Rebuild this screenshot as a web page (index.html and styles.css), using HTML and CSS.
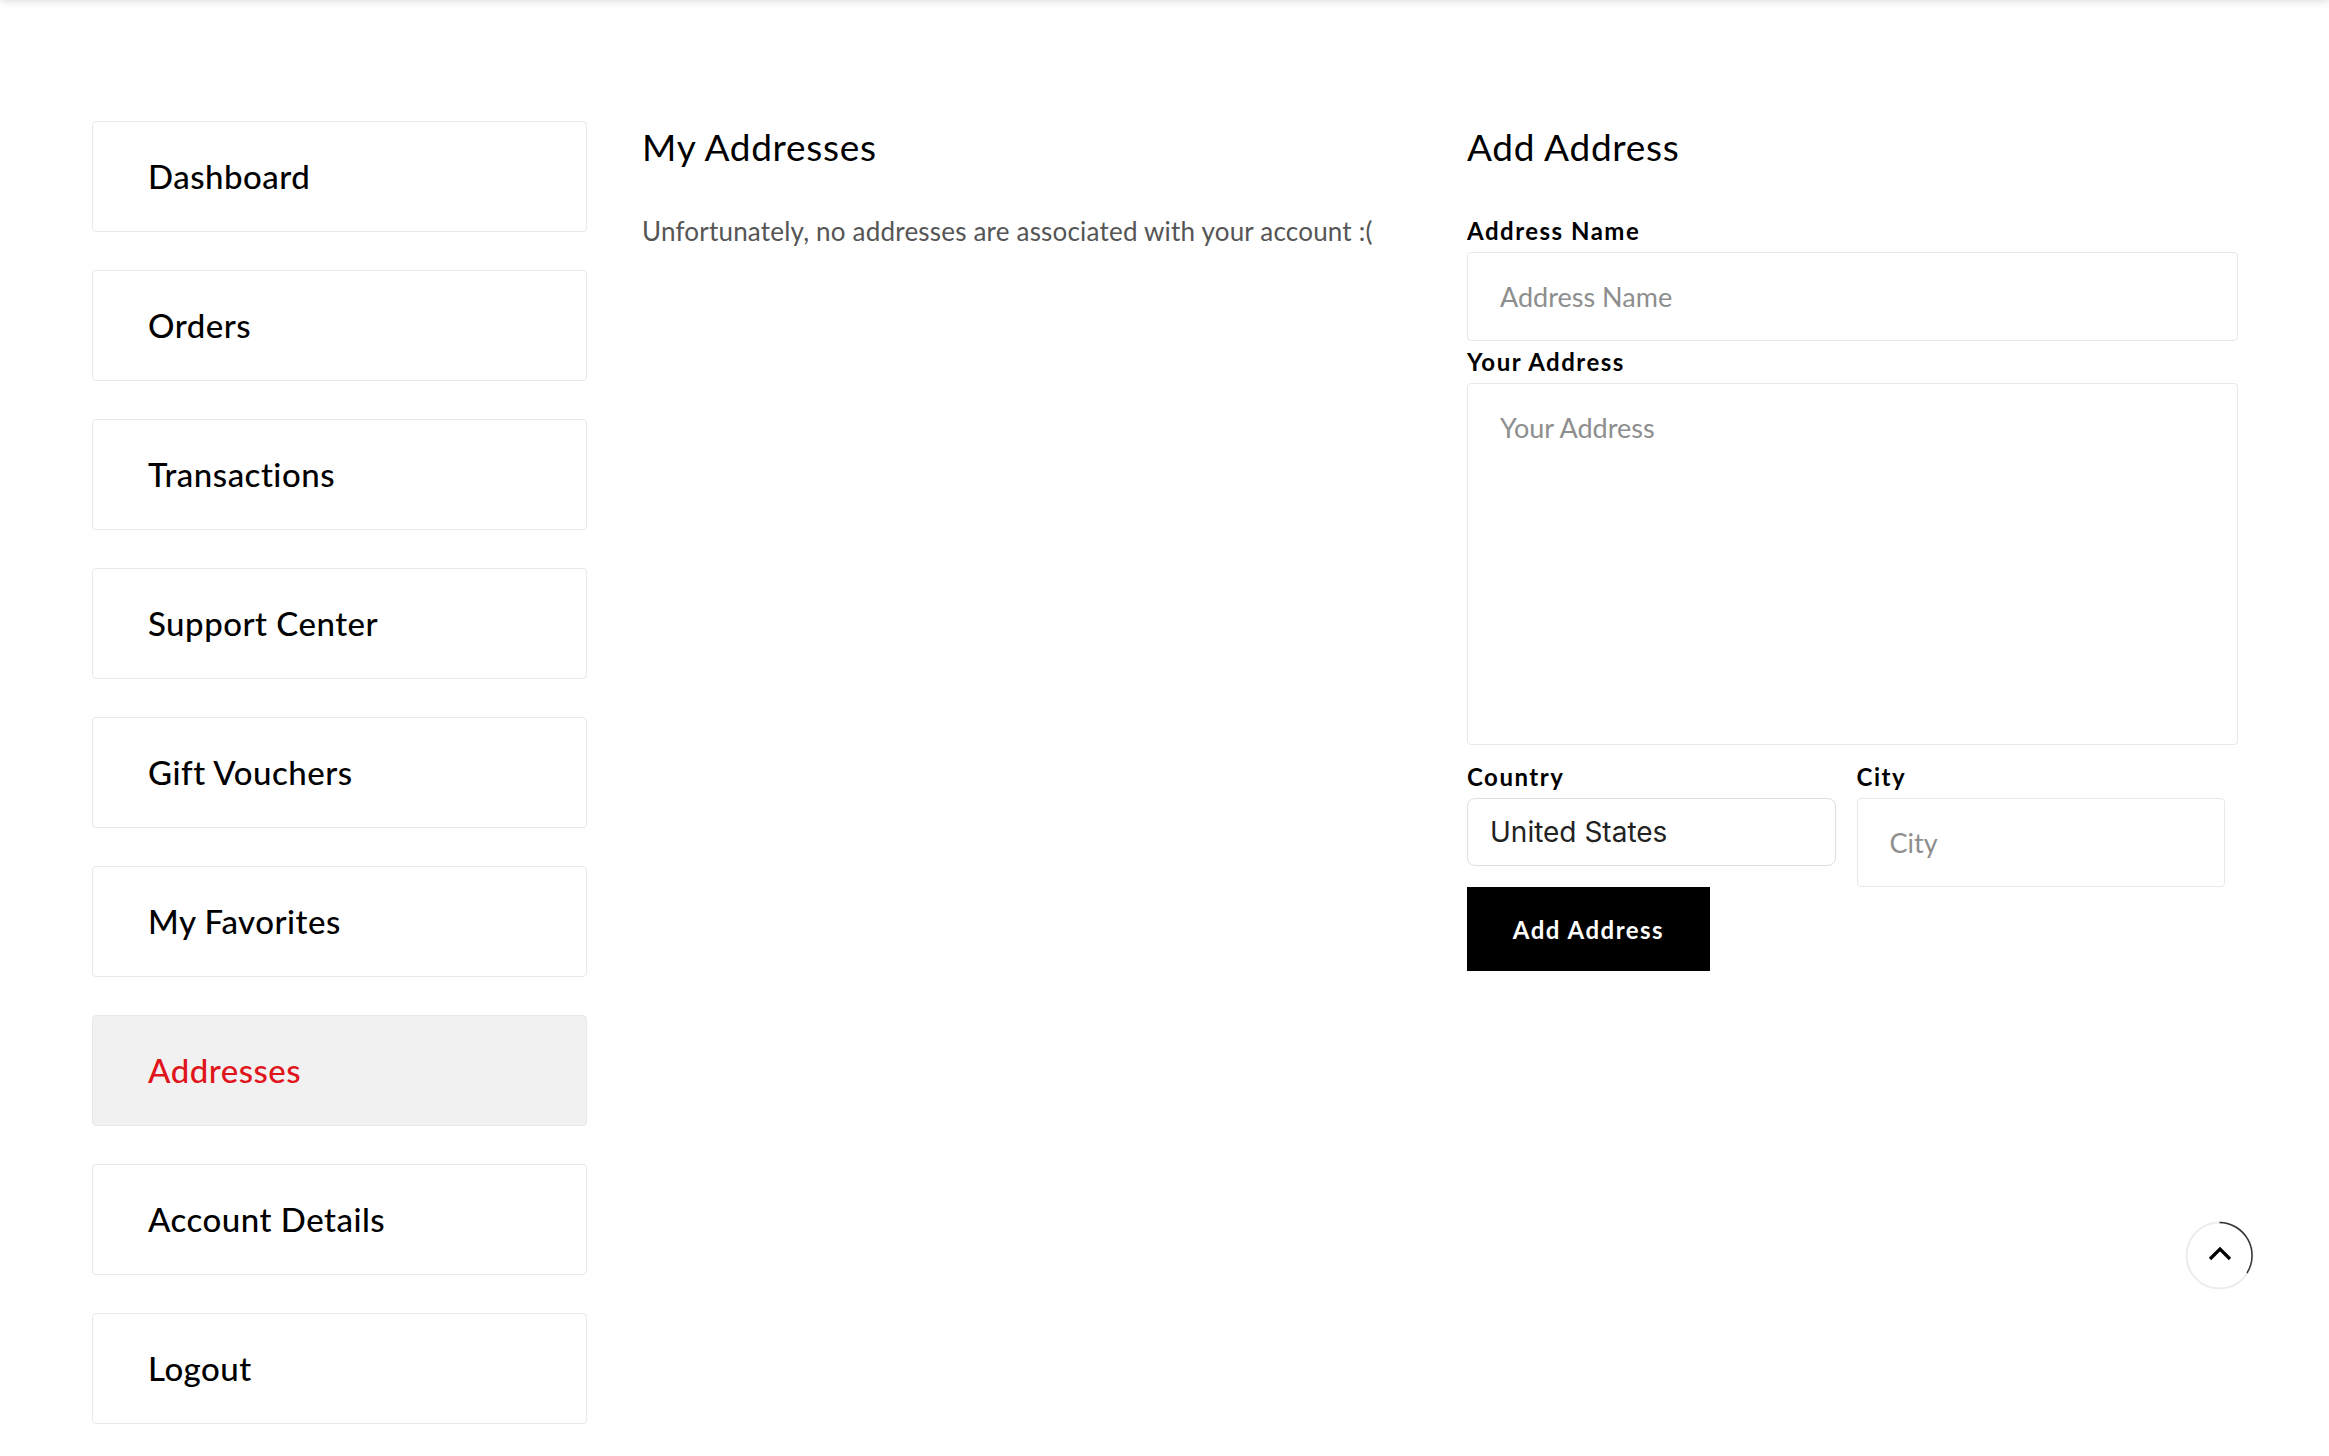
FILE: index.html
```html
<!DOCTYPE html>
<html lang="en">

<head>
    <meta charset="UTF-8">
    <meta name="viewport" content="width=device-width, initial-scale=1.0">
    <title>My Account - Addresses</title>

    <link rel="stylesheet" href="styles.css">
</head>

<body>
    <div class="header-shadow"></div>

    <div class="account">
        <nav class="account-nav">
            <a class="nav-item" href="#">Dashboard</a>
            <a class="nav-item" href="#">Orders</a>
            <a class="nav-item" href="#">Transactions</a>
            <a class="nav-item" href="#">Support Center</a>
            <a class="nav-item" href="#">Gift Vouchers</a>
            <a class="nav-item" href="#">My Favorites</a>
            <a class="nav-item active" href="#">Addresses</a>
            <a class="nav-item" href="#">Account Details</a>
            <a class="nav-item" href="#">Logout</a>
        </nav>

        <section class="address-list">
            <h2 class="section-title">My Addresses</h2>
            <p class="empty-text">Unfortunately, no addresses are associated with your account :(</p>
        </section>

        <section class="address-form">
            <h2 class="section-title">Add Address</h2>
            <form>
                <label class="field-label" for="address_name">Address Name</label>
                <input class="field-input" type="text" id="address_name" placeholder="Address Name">

                <label class="field-label" for="address_text">Your Address</label>
                <textarea class="field-input field-textarea" id="address_text" placeholder="Your Address"></textarea>

                <div class="field-row">
                    <div class="field-col">
                        <label class="field-label" for="country">Country</label>
                        <select class="field-select" id="country">
                            <option>United States</option>
                        </select>
                        <button class="submit-btn" type="button">Add Address</button>
                    </div>
                    <div class="field-col">
                        <label class="field-label" for="city">City</label>
                        <input class="field-input" type="text" id="city" placeholder="City">
                    </div>
                </div>
            </form>
        </section>
    </div>

    <button class="scroll-top" type="button" aria-label="Scroll to top">
        <svg class="scroll-ring" width="69" height="69" viewBox="0 0 69 69">
            <circle cx="34.5" cy="34.5" r="33" fill="none" stroke="#ececec" stroke-width="2" />
            <path d="M34.5 1.5 A33 33 0 0 1 62 52" fill="none" stroke="#333" stroke-width="1.5" />
        </svg>
        <svg class="scroll-arrow" width="24" height="16" viewBox="0 0 24 16">
            <path d="M2 13 L12 3 L22 13" fill="none" stroke="#000" stroke-width="3.2" />
        </svg>
    </button>
</body>

</html>
```

FILE: styles.css
```css
* {
    box-sizing: border-box;
    margin: 0;
    padding: 0;
}

body {
    background: #fff;
    color: #000;
    font-family: Lato, "Noto Sans", sans-serif;
    height: 100vh;
    overflow: hidden;
}

.header-shadow {
    position: fixed;
    top: -20px;
    left: 0;
    right: 0;
    height: 20px;
    box-shadow: 0 0 10px rgba(0, 0, 0, 0.18);
}

.account {
    display: flex;
    align-items: flex-start;
    padding: 121px 91px 0 92px;
}

/* sidebar */
.account-nav {
    display: flex;
    flex-direction: column;
    gap: 38px;
    width: 495px;
    flex-shrink: 0;
}

.nav-item {
    display: flex;
    align-items: center;
    height: 111px;
    padding-left: 55px;
    padding-bottom: 2px;
    border: 1px solid #e9e9e9;
    border-radius: 4px;
    color: #000;
    font-size: 33px;
    font-weight: 500;
    letter-spacing: 0.5px;
    text-decoration: none;
}

.nav-item.active {
    background-color: #f1f1f1;
    color: #e0141b;
}

/* content */
.section-title {
    font-size: 37px;
    font-weight: 400;
    line-height: 44px;
    letter-spacing: 0.7px;
    margin-top: 4px;
}

.address-list {
    width: 825px;
    margin-left: 55px;
    flex-shrink: 0;
}

.empty-text {
    margin-top: 46px;
    font-size: 26px;
    line-height: 32px;
    letter-spacing: 0.2px;
    color: #555;
}

.address-form {
    flex: 1;
}

.address-form form {
    display: flex;
    flex-direction: column;
    margin-top: 48px;
}

.field-label {
    display: block;
    font-size: 24px;
    font-weight: 700;
    line-height: 28px;
    letter-spacing: 1.5px;
    margin-bottom: 7px;
}

.field-input {
    display: block;
    width: 100%;
    height: 89px;
    padding: 0 32px;
    border: 1px solid #e8e8e8;
    border-radius: 4px;
    font-family: Lato, "Noto Sans", sans-serif;
    font-size: 27px;
    color: #222;
    outline: none;
    margin-bottom: 7px;
}

.field-input::placeholder {
    color: #8e8e8e;
}

.field-textarea {
    height: 362px;
    padding-top: 27px;
    resize: none;
    margin-bottom: 18px;
}

.field-row {
    display: flex;
    gap: 21px;
    padding-right: 13px;
}

.field-row .field-label {
    margin-bottom: 7px;
}

.field-col {
    flex: 1;
    display: flex;
    flex-direction: column;
}

.field-select {
    height: 68px;
    padding: 0 22px;
    border: 1px solid #dcdfe4;
    border-radius: 8px;
    background: #fff;
    font-family: Inter, "Noto Sans", sans-serif;
    font-size: 28px;
    color: #222;
    appearance: none;
    -webkit-appearance: none;
    outline: none;
}

.submit-btn {
    margin-top: 21px;
    width: 243px;
    height: 84px;
    background-color: #000;
    color: #fff;
    border: 0;
    font-family: Lato, "Noto Sans", sans-serif;
    font-size: 24px;
    font-weight: 700;
    letter-spacing: 1.5px;
    cursor: pointer;
}

/* scroll to top */
.scroll-top {
    position: fixed;
    right: 75px;
    bottom: 166px;
    width: 69px;
    height: 69px;
    border: 0;
    border-radius: 50%;
    background: #fff;
    display: flex;
    align-items: center;
    justify-content: center;
    cursor: pointer;
}

.scroll-ring {
    position: absolute;
    top: 0;
    left: 0;
}

.scroll-arrow {
    position: relative;
    top: -2px;
}
```
